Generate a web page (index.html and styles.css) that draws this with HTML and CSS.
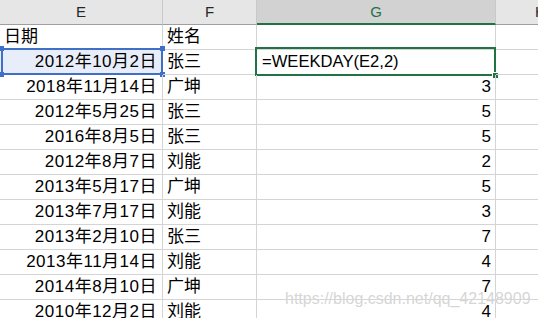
FILE: index.html
```html
<!DOCTYPE html>
<html lang="zh-CN">
<head>
    <meta charset="UTF-8">
    <title>WEEKDAY</title>
    <link rel="stylesheet" href="styles.css">
</head>
<body>
    <div class="sheet">
        <!-- Column headers -->
        <div class="head">E</div>
        <div class="head">F</div>
        <div class="head head-active">G</div>
        <div class="head">H</div>

        <div class="cell">日期</div>
        <div class="cell">姓名</div>
        <div class="cell"></div>
        <div class="cell"></div>

        <div class="cell num date ref">2012年10月2日<span class="ref-box"><i class="h tl"></i><i class="h tr"></i><i class="h bl"></i><i class="h br"></i></span></div>
        <div class="cell">张三</div>
        <div class="cell formula">=WEEKDAY(E2,2)<span class="edit-box"><i class="fill"></i></span></div>
        <div class="cell"></div>

        <div class="cell num date">2018年11月14日</div>
        <div class="cell">广坤</div>
        <div class="cell num">3</div>
        <div class="cell"></div>

        <div class="cell num date">2012年5月25日</div>
        <div class="cell">张三</div>
        <div class="cell num">5</div>
        <div class="cell"></div>

        <div class="cell num date">2016年8月5日</div>
        <div class="cell">张三</div>
        <div class="cell num">5</div>
        <div class="cell"></div>

        <div class="cell num date">2012年8月7日</div>
        <div class="cell">刘能</div>
        <div class="cell num">2</div>
        <div class="cell"></div>

        <div class="cell num date">2013年5月17日</div>
        <div class="cell">广坤</div>
        <div class="cell num">5</div>
        <div class="cell"></div>

        <div class="cell num date">2013年7月17日</div>
        <div class="cell">刘能</div>
        <div class="cell num">3</div>
        <div class="cell"></div>

        <div class="cell num date">2013年2月10日</div>
        <div class="cell">张三</div>
        <div class="cell num">7</div>
        <div class="cell"></div>

        <div class="cell num date">2013年11月14日</div>
        <div class="cell">刘能</div>
        <div class="cell num">4</div>
        <div class="cell"></div>

        <div class="cell num date">2014年8月10日</div>
        <div class="cell">广坤</div>
        <div class="cell num">7</div>
        <div class="cell"></div>

        <div class="cell num date">2010年12月2日</div>
        <div class="cell">刘能</div>
        <div class="cell num">4</div>
        <div class="cell"></div>
    </div>

    <div class="watermark">https://blog.csdn.net/qq_42148909</div>
</body>
</html>
```

FILE: styles.css
```css
/* Page */
body {
    margin: 0;
    width: 538px;
    height: 318px;
    overflow: hidden;
    position: relative;
    background-color: #fff;
    font-family: "Liberation Sans", "Noto Sans CJK SC", sans-serif;
    color: #000;
}

/* Grid of cells */
.sheet {
    display: grid;
    grid-template-columns: 163px 94px 239px 90px;
    grid-auto-rows: 25px;
    width: 586px;
}

.head {
    box-sizing: border-box;
    background-color: #e6e6e6;
    border-right: 1px solid #c8c8c8;
    border-bottom: 1px solid #9f9f9f;
    font-size: 15px;
    line-height: 24px;
    text-align: center;
    color: #262626;
}

.head-active {
    background-color: #d2d2d2;
    color: #217346;
    border-bottom: 2px solid #217346;
}

.cell {
    box-sizing: border-box;
    position: relative;
    border-right: 1px solid #d4d4d4;
    border-bottom: 1px solid #d4d4d4;
    padding: 0 4px 0 4px;
    font-size: 17px;
    line-height: 24px;
    white-space: nowrap;
}

.num {
    text-align: right;
}

.date {
    letter-spacing: 0.5px;
    padding-right: 5px;
}

.formula {
    padding-left: 5px;
    font-size: 16.6px;
}

/* Referenced cell E2 */
.ref {
    background-color: #e8eef9;
}

.ref-box {
    position: absolute;
    left: 1px;
    top: -2px;
    right: -1px;
    bottom: -1px;
    border: 2px solid #3f6fc6;
}

.h {
    position: absolute;
    width: 5px;
    height: 5px;
    background-color: #3f6fc6;
}

.tl { left: -4px; top: -4px; }
.tr { right: -4px; top: -4px; }
.bl { left: -4px; bottom: -4px; }
.br { right: -4px; bottom: -4px; }

/* Active cell G2 */
.edit-box {
    position: absolute;
    left: -2px;
    top: -3px;
    right: -1px;
    bottom: -2px;
    border: 2px solid #217346;
}

.fill {
    position: absolute;
    right: -4px;
    bottom: -4px;
    width: 5px;
    height: 5px;
    background-color: #217346;
    border-left: 1px solid #fff;
    border-top: 1px solid #fff;
}

/* Blog watermark */
.watermark {
    position: absolute;
    left: 285px;
    top: 288px;
    font-family: "Liberation Sans", sans-serif;
    font-size: 16px;
    line-height: 22px;
    color: rgba(200, 200, 200, 0.75);
    text-shadow: 0 0 1px rgba(255, 255, 255, 0.8);
}
```
